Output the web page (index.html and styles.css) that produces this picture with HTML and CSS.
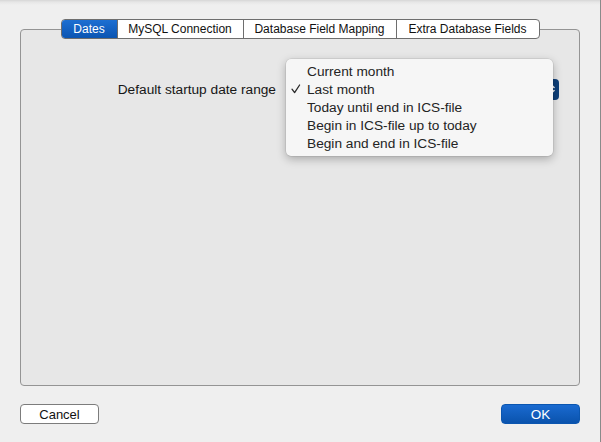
FILE: index.html
```html
<!DOCTYPE html>
<html>
<head>
<meta charset="utf-8">
<link rel="stylesheet" href="styles.css">
</head>
<body>
<div class="window">
  <div class="tabview">
    <div class="tabs">
      <div class="tab active">Dates</div>
      <div class="tab">MySQL Connection</div>
      <div class="tab">Database Field Mapping</div>
      <div class="tab">Extra Database Fields</div>
    </div>
    <div class="panel">
      <div class="row">
        <div class="label">Default startup date range</div>
        <div class="popup">
          <svg class="chev" width="10" height="14" viewBox="0 0 10 14"><path d="M2 5.5 L5 2.5 L8 5.5 M2 8.5 L5 11.5 L8 8.5" fill="none" stroke="#fff" stroke-width="1.6" stroke-linecap="round" stroke-linejoin="round"/></svg>
          <div class="menu">
            <div class="item"><span class="check"></span><span>Current month</span></div>
            <div class="item"><span class="check"><svg width="10" height="10" viewBox="0 0 10 10"><path d="M1 5.2 L3.6 8.6 L8.6 1" fill="none" stroke="#2a2a2a" stroke-width="1.3" stroke-linecap="round" stroke-linejoin="round"/></svg></span><span>Last month</span></div>
            <div class="item"><span class="check"></span><span>Today until end in ICS-file</span></div>
            <div class="item"><span class="check"></span><span>Begin in ICS-file up to today</span></div>
            <div class="item"><span class="check"></span><span>Begin and end in ICS-file</span></div>
          </div>
        </div>
      </div>
    </div>
  </div>
  <div class="buttons">
    <button class="btn">Cancel</button>
    <button class="btn primary">OK</button>
  </div>
</div>
<div class="edge"></div>
</body>
</html>
```

FILE: styles.css
```css
html, body {
  margin: 0;
  padding: 0;
}
body {
  width: 601px;
  height: 442px;
  overflow: hidden;
  background: linear-gradient(#d6d6d6 0, #e6e6e6 2px, #efefef 5px, #efefef 100%);
  font-family: "Liberation Sans", Arial, sans-serif;
  color: #1a1a1a;
  position: relative;
}
.window {
  display: flex;
  flex-direction: column;
  padding: 19px 21px 0 20px;
}
.tabview {
  display: flex;
  flex-direction: column;
  align-items: center;
}
.tabs {
  display: flex;
  height: 20px;
  margin-bottom: -10px;
  position: relative;
  z-index: 1;
  border: 1px solid #6e6e6e;
  border-radius: 4px;
  background: #fff;
  box-sizing: border-box;
  overflow: hidden;
}
.tab {
  display: flex;
  align-items: center;
  justify-content: center;
  font-size: 12px;
  color: #111;
  border-left: 1px solid #6e6e6e;
  box-sizing: border-box;
}
.tab:first-child {
  border-left: none;
}
.tab:nth-child(1) { width: 55px; }
.tab:nth-child(2) { width: 126px; }
.tab:nth-child(3) { width: 153px; }
.tab:nth-child(4) { width: 143px; }
.tab.active {
  background: linear-gradient(#1d6fd2, #0b55b2);
  color: #fff;
}
.panel {
  align-self: stretch;
  height: 357px;
  box-sizing: border-box;
  background: #e7e7e7;
  border: 1px solid #949494;
  border-radius: 4px;
  padding-top: 49px;
}
.row {
  display: grid;
  grid-template-columns: 255px 273px;
  column-gap: 10px;
  align-items: center;
}
.label {
  text-align: right;
  font-size: 13.7px;
  color: #161616;
}
.popup {
  position: relative;
  height: 21px;
  border-radius: 4px;
  background: #0e3f79;
}
.chev {
  position: absolute;
  right: 3px;
  top: 3px;
}
.menu {
  position: absolute;
  left: 0;
  top: -20px;
  width: 267px;
  box-sizing: border-box;
  padding: 3px 0 4px;
  background: #f6f6f6;
  border-radius: 5px;
  box-shadow: 0 0 0 0.5px rgba(0,0,0,0.12), 0 3px 10px rgba(0,0,0,0.28);
}
.item {
  display: flex;
  align-items: center;
  height: 18px;
  font-size: 13.7px;
  color: #242424;
}
.check {
  width: 21px;
  padding-left: 5px;
  box-sizing: border-box;
  display: flex;
  align-items: center;
}
.buttons {
  display: flex;
  justify-content: space-between;
  margin-top: 18px;
}
.btn {
  width: 79px;
  height: 20px;
  font-family: "Liberation Sans", Arial, sans-serif;
  font-size: 13px;
  padding: 0;
  border-radius: 4px;
  border: 1px solid #7c7c7c;
  background: #fff;
  color: #111;
}
.btn.primary {
  border: 1px solid #0b56b0;
  background: linear-gradient(#1a6ad0, #0a53ad);
  color: #fff;
  font-size: 13.5px;
}
.edge {
  position: absolute;
  right: 0;
  top: 0;
  bottom: 0;
  width: 1px;
  background: #8a8a8a;
}
```
